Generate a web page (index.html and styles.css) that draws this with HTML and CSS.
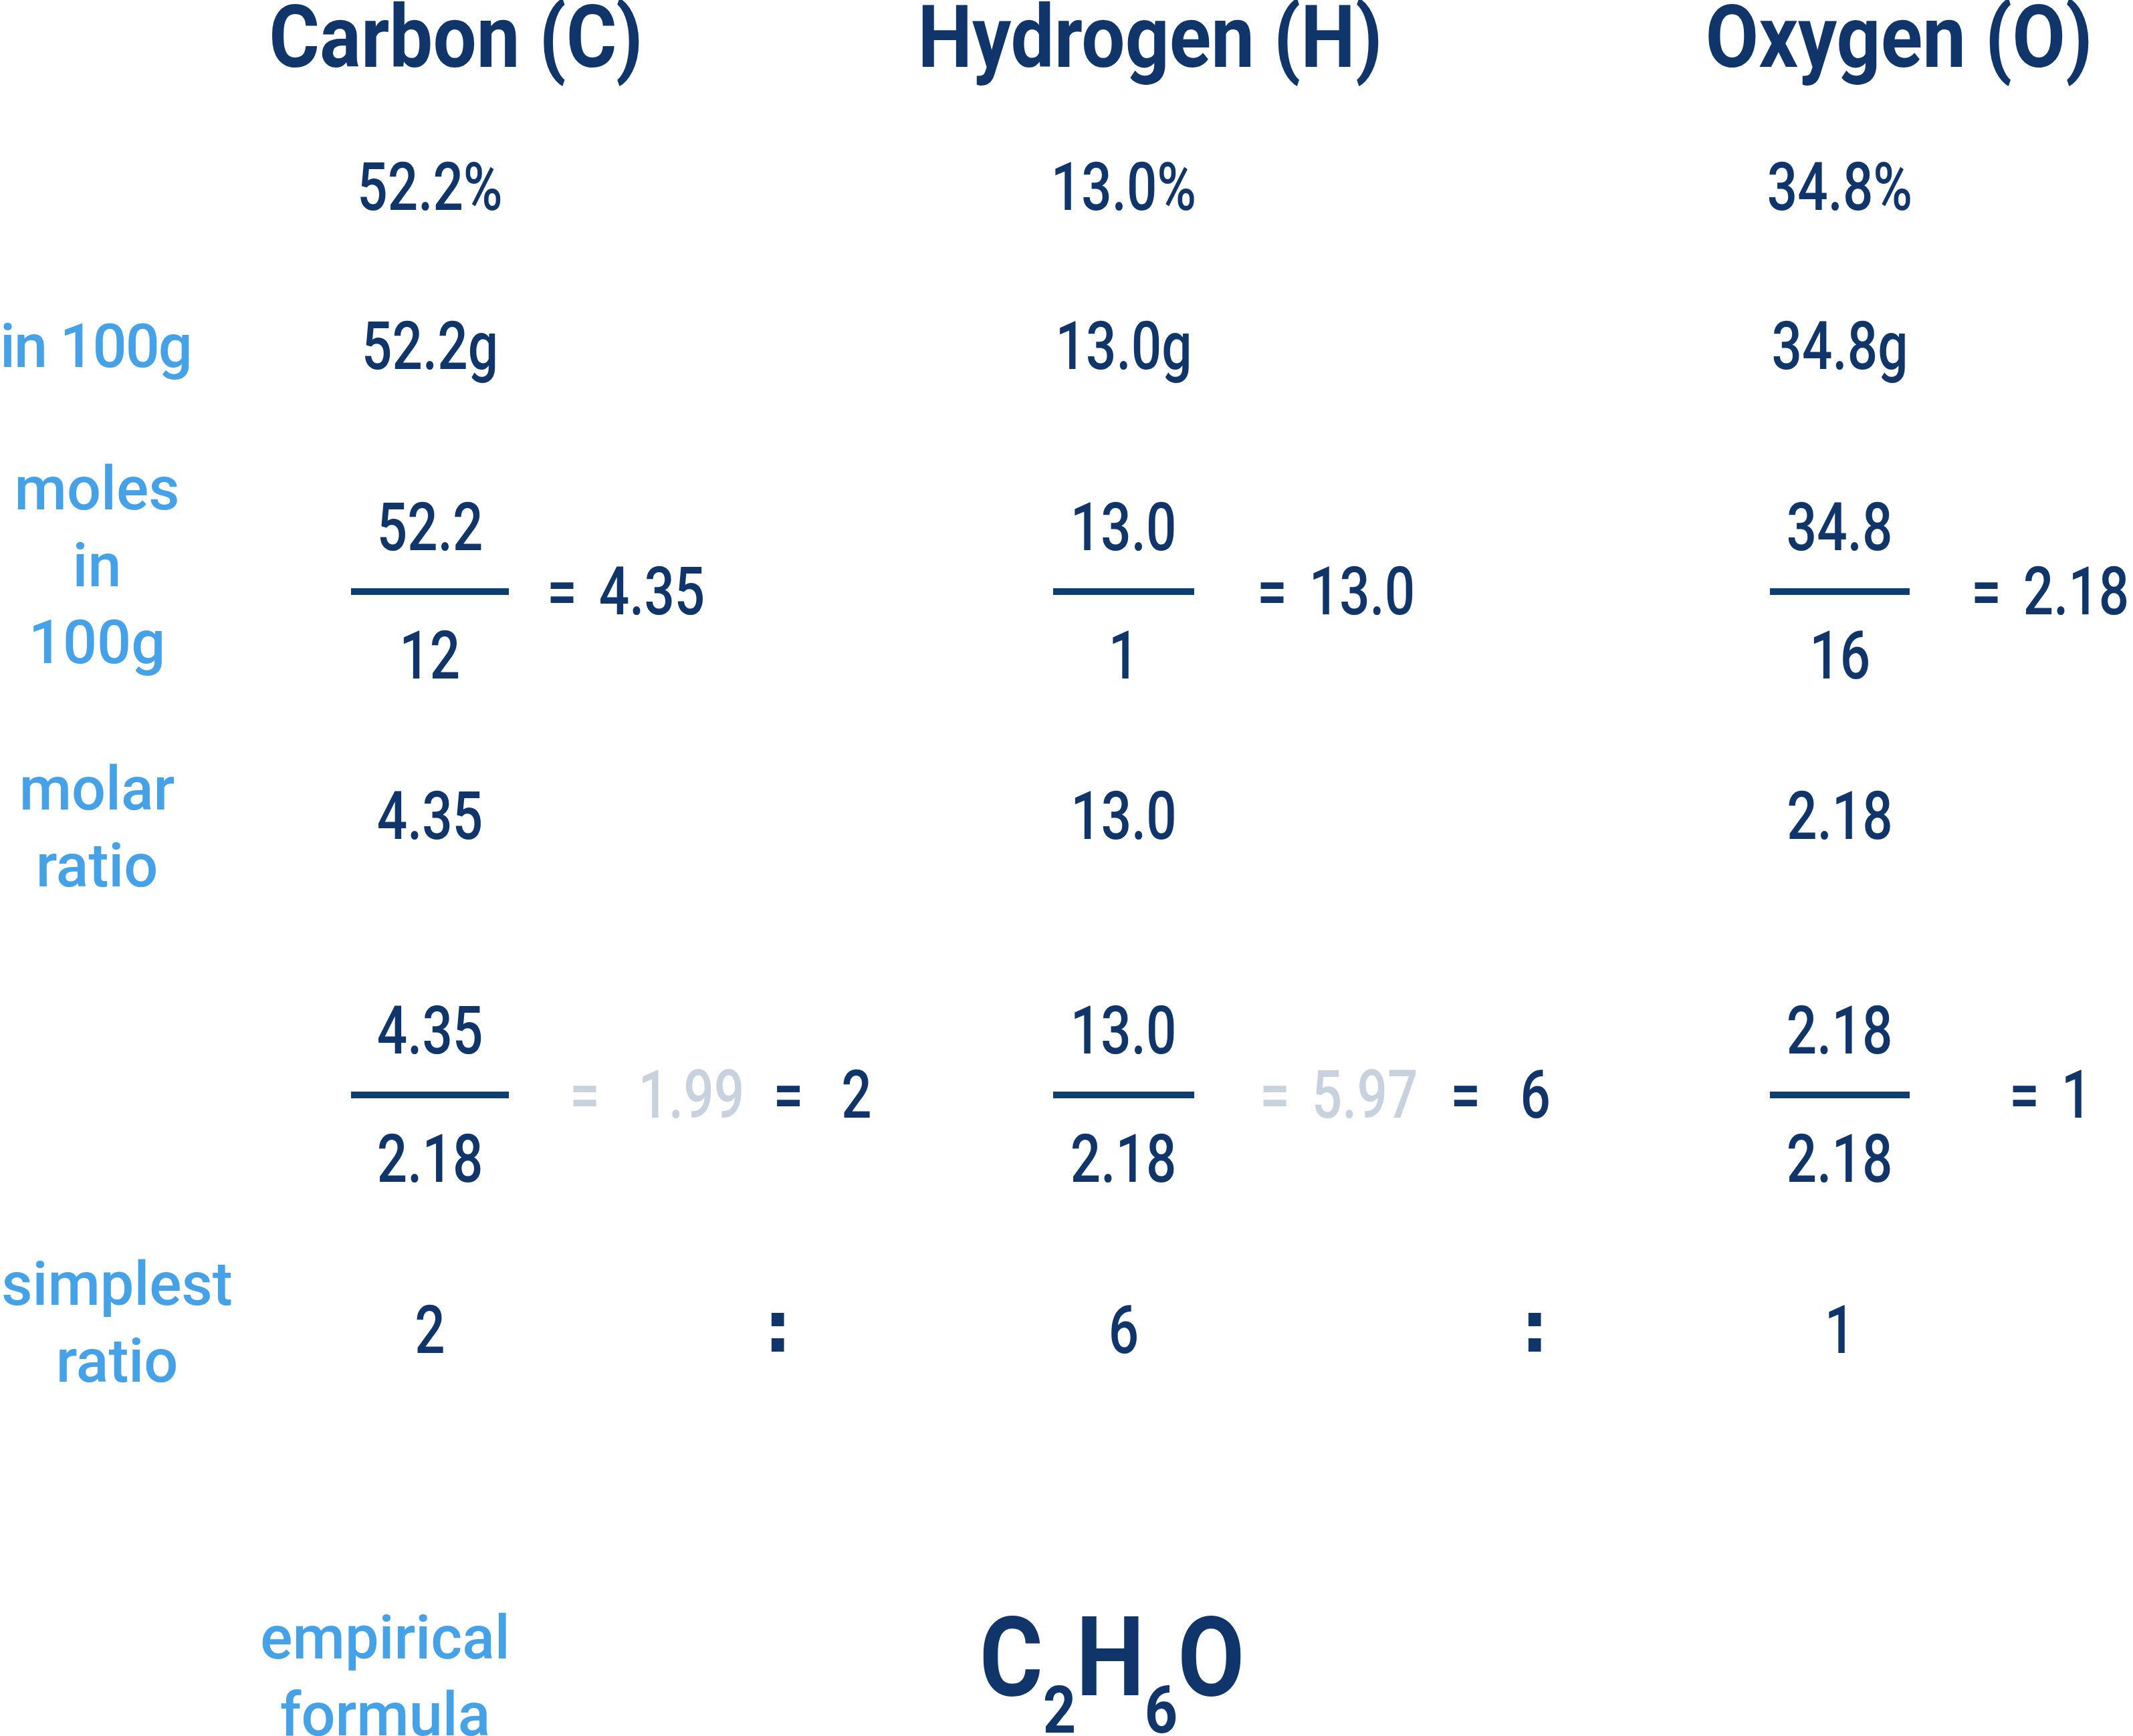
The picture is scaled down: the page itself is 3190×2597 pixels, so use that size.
FILE: index.html
```html
<!DOCTYPE html>
<html lang="en">
<head>
<meta charset="utf-8">
<title>Empirical formula</title>
<link rel="stylesheet" href="styles.css">
</head>
<body>
<div class="sheet">
  <div class="row row--head">
    <h2 class="head head--c">Carbon (C)</h2>
    <h2 class="head head--h">Hydrogen (H)</h2>
    <h2 class="head head--o">Oxygen (O)</h2>
  </div>

  <div class="row row--pct">
    <div class="val at-c">52.2%</div>
    <div class="val at-h">13.0%</div>
    <div class="val at-o">34.8%</div>
  </div>

  <div class="row row--mass">
    <div class="lbl lbl--flush"><span>in 100g</span></div>
    <div class="val at-c">52.2g</div>
    <div class="val at-h">13.0g</div>
    <div class="val at-o">34.8g</div>
  </div>

  <div class="row row--moles">
    <div class="lbl lbl--moles"><span>moles</span><span>in</span><span>100g</span></div>
    <div class="frac at-c"><span class="frac-num">52.2</span><span class="frac-bar"></span><span class="frac-den">12</span></div>
    <div class="res at-m1 res--c1"><span class="res-text">= 4.35</span></div>
    <div class="frac at-h"><span class="frac-num">13.0</span><span class="frac-bar"></span><span class="frac-den">1</span></div>
    <div class="res at-m2 res--h1"><span class="res-text">= 13.0</span></div>
    <div class="frac at-o"><span class="frac-num">34.8</span><span class="frac-bar"></span><span class="frac-den">16</span></div>
    <div class="res at-t res--o1"><span class="res-text">= 2.18</span></div>
  </div>

  <div class="row row--ratio">
    <div class="lbl lbl--molar"><span>molar</span><span>ratio</span></div>
    <div class="val at-c">4.35</div>
    <div class="val at-h">13.0</div>
    <div class="val at-o">2.18</div>
  </div>

  <div class="row row--divide">
    <div class="frac at-c"><span class="frac-num">4.35</span><span class="frac-bar"></span><span class="frac-den">2.18</span></div>
    <div class="res at-m1 res--c2">
      <span class="res-text"><span class="ghost">=</span><span class="ghost gap-c1">1.99</span><span class="gap-c2">=</span><span class="gap-c3">2</span></span>
    </div>
    <div class="frac at-h"><span class="frac-num">13.0</span><span class="frac-bar"></span><span class="frac-den">2.18</span></div>
    <div class="res at-m2 res--h2">
      <span class="res-text"><span class="ghost">=</span><span class="ghost gap-h1">5.97</span><span class="gap-h2">=</span><span class="gap-h3">6</span></span>
    </div>
    <div class="frac at-o"><span class="frac-num">2.18</span><span class="frac-bar"></span><span class="frac-den">2.18</span></div>
    <div class="res at-t res--o2"><span class="res-text">= 1</span></div>
  </div>

  <div class="row row--simple">
    <div class="lbl lbl--simplest"><span>simplest</span><span>ratio</span></div>
    <div class="val at-c">2</div>
    <div class="colon at-m1 colon--a">:</div>
    <div class="val at-h">6</div>
    <div class="colon at-m2 colon--b">:</div>
    <div class="val at-o">1</div>
  </div>

  <div class="row row--formula">
    <div class="lbl lbl--empirical"><span>empirical</span><span>formula</span></div>
    <div class="formula">C<sub class="sub">2</sub>H<sub class="sub">6</sub>O</div>
  </div>
</div>
</body>
</html>
```

FILE: styles.css
```css
html, body {
  margin: 0;
  padding: 0;
  overflow: hidden;
  background: #ffffff;
}

.sheet {
  width: 3190px;
  height: 2597px;
  font-family: Roboto, "Noto Sans", sans-serif;
  font-weight: 500;
  color: #10356b;
}

.row {
  display: grid;
  grid-template-columns: 290px 235px 236px 814px 211px 861px 209px 334px;
  grid-template-rows: 100%;
  align-items: center;
}

/* headings */
.row--head {
  grid-template-columns: 382px 600px 438px 600px 520px 600px 50px;
  height: 112px;
}
.head {
  display: flex;
  justify-content: center;
  margin: 0;
  font-size: 130px;
  font-weight: 700;
  line-height: 112px;
  white-space: nowrap;
  transform: scaleX(0.89);
}
.head--c { grid-column: 2; }
.head--h { grid-column: 4; }
.head--o { grid-column: 6; }

/* row spacing */
.row--pct { height: 120px; margin-top: 108px; }
.row--mass { height: 120px; margin-top: 118px; }
.row--moles { height: 300px; margin-top: 157px; }
.row--ratio { height: 240px; margin-top: 66px; }
.row--divide { height: 300px; margin-top: 147px; }
.row--simple { height: 240px; margin-top: 82px; }
.row--formula {
  grid-template-columns: 1152px 211px 600px 1227px;
  height: 240px;
  margin-top: 250px;
}

/* column placement */
.at-c { grid-column: 3; }
.at-m1 { grid-column: 4; }
.at-h { grid-column: 5; }
.at-m2 { grid-column: 6; }
.at-o { grid-column: 7; }
.at-t { grid-column: 8; }

/* values */
.val {
  display: flex;
  justify-content: center;
  font-size: 100px;
  line-height: 100px;
  white-space: nowrap;
  transform: scaleX(0.8);
}

/* fractions */
.frac {
  display: flex;
  flex-direction: column;
  align-items: center;
  font-size: 100px;
  line-height: 100px;
  white-space: nowrap;
}
.frac-num,
.frac-den {
  transform: scaleX(0.8);
}
.frac-num { margin-bottom: 41px; }
.frac-bar {
  align-self: stretch;
  height: 10px;
  background: #0d3e71;
}
.frac-den { margin-top: 41px; }

/* results */
.res {
  display: flex;
  align-items: center;
  font-size: 100px;
  line-height: 100px;
  white-space: nowrap;
}
.res-text {
  display: flex;
  align-items: baseline;
  transform: scaleX(0.8);
  transform-origin: left center;
  white-space: pre;
  word-spacing: 16px;
}
.res--c1 { padding-left: 57px; }
.res--h1 { padding-left: 94px; }
.res--o1 { padding-left: 92px; }
.res--c2 { padding-left: 91px; }
.res--h2 { padding-left: 98px; }
.res--o2 { padding-left: 149px; }

.ghost { color: #c8d2df; }
.gap-c1 { margin-left: 72px; }
.gap-c2 { margin-left: 54px; }
.gap-c3 { margin-left: 71px; }
.gap-h1 { margin-left: 41px; }
.gap-h2 { margin-left: 61px; }
.gap-h3 { margin-left: 74px; }

/* colons: square dots */
.colon {
  font-family: "DejaVu Sans", sans-serif;
  font-size: 106px;
  font-weight: 700;
  line-height: 100px;
  margin-bottom: 8px;
}
.colon--a { padding-left: 381px; }
.colon--b { padding-left: 488px; }

/* labels */
.lbl {
  grid-column: 1;
  display: flex;
  flex-direction: column;
  align-items: center;
  font-family: Roboto, "Noto Sans", sans-serif;
  font-weight: 500;
  font-size: 90px;
  line-height: 115px;
  color: #45a1e8;
  white-space: nowrap;
}
.lbl--flush { align-items: flex-start; letter-spacing: -2px; }
.lbl--moles { margin-bottom: 77px; }
.lbl--molar { margin-top: 34px; }
.lbl--simplest { margin-left: 60px; margin-bottom: 22px; }
.lbl--empirical { margin-top: 56px; }

/* formula */
.formula {
  grid-column: 3;
  text-align: center;
  font-size: 165px;
  font-weight: 700;
  height: 166px;
  line-height: 166px;
  white-space: nowrap;
  transform: scaleX(0.88);
}
.sub {
  font-size: 98px;
  line-height: 0;
  vertical-align: -56px;
}
```
